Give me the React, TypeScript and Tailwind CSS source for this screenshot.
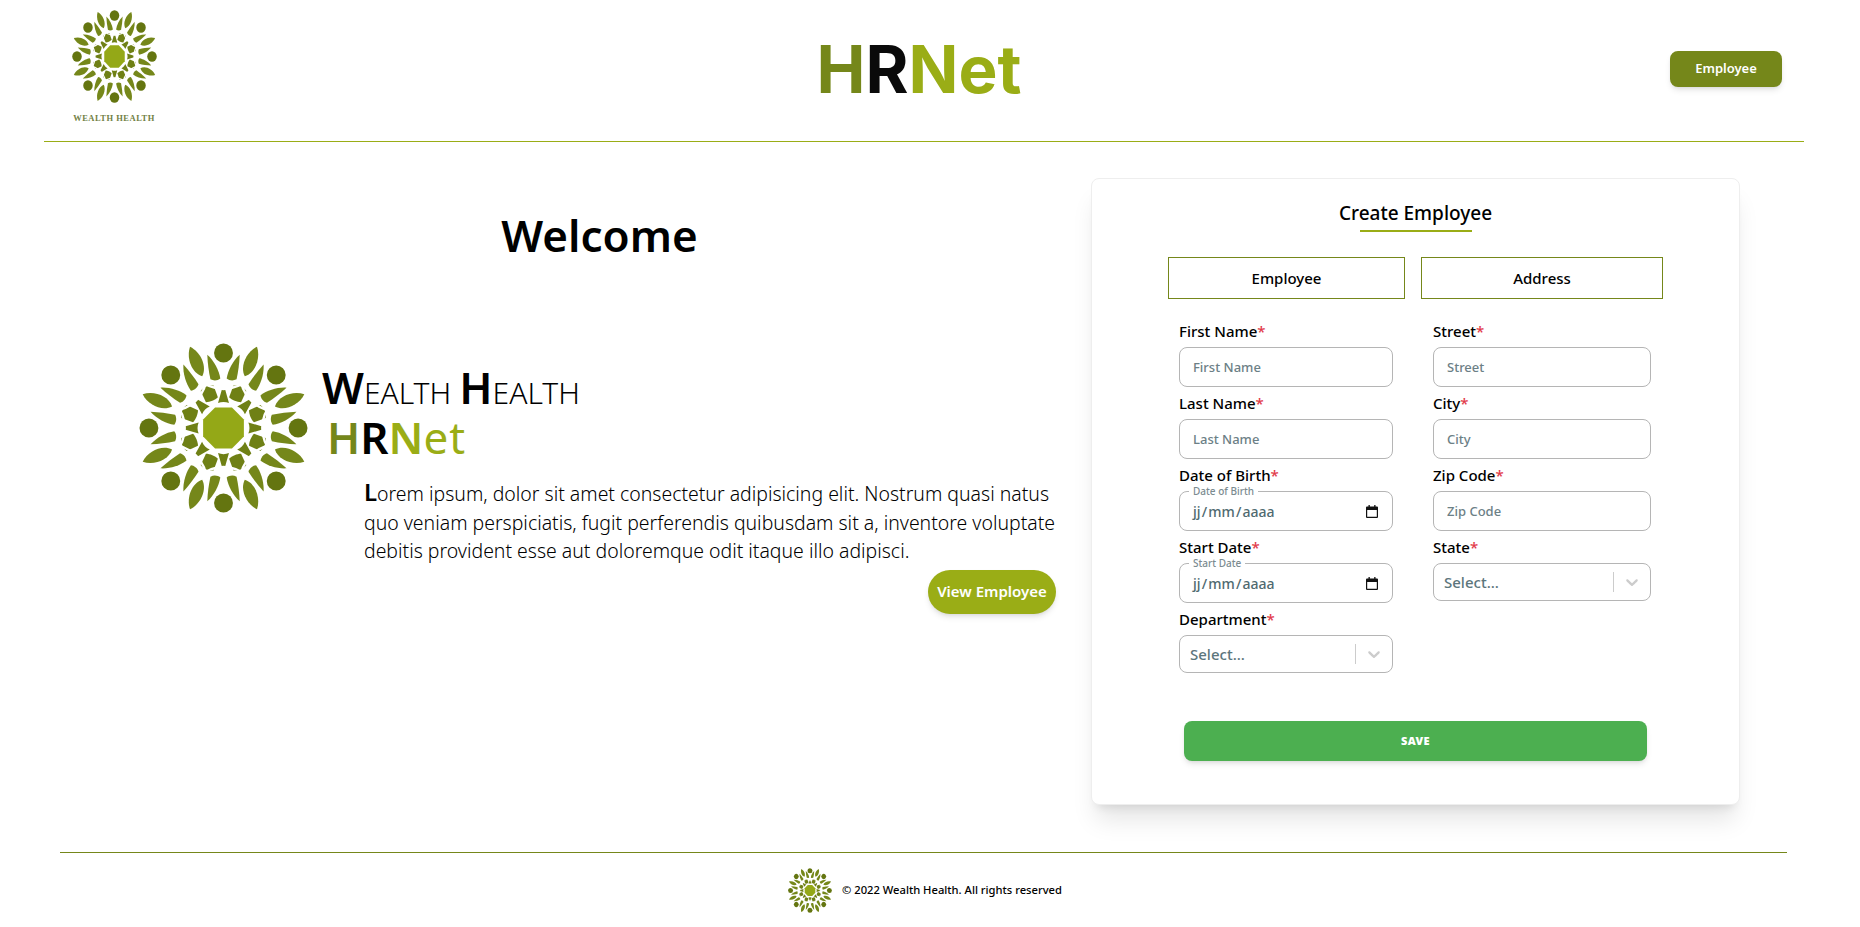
import React from "react";

const ANGLES = [0, 45, 90, 135, 180, 225, 270, 315];

// flower logo, drawn at 170 units across
function FlowerLogo({ className }: { className?: string }) {
  return (
    <svg viewBox="-85 -85 170 170" preserveAspectRatio="none" className={className}>
      <polygon
        points="-8.5,-20.5 8.5,-20.5 20.5,-8.5 20.5,8.5 8.5,20.5 -8.5,20.5 -20.5,8.5 -20.5,-8.5"
        fill="#94a817"
      />
      {ANGLES.map((a) => (
        <g key={a} transform={`rotate(${a})`}>
          <path d="M-5.5 -25 C-2 -26.5 2 -26.5 5.5 -25 L1.5 -39 L-1.5 -39 Z" fill="#6f8015" />
        </g>
      ))}
      {ANGLES.map((a) => (
        <g key={a} transform={`rotate(${a + 22.5})`}>
          {/* side crescents */}
          <path d="M-16 -47 C-13 -46 -9 -47 -6.5 -50 C-8 -58 -10 -66 -13 -74 C-17 -66 -18 -55 -16 -47 Z" fill="#75871a" />
          <path d="M16 -47 C13 -46 9 -47 6.5 -50 C8 -58 10 -66 13 -74 C17 -66 18 -55 16 -47 Z" fill="#75871a" />
          {/* mosaic block */}
          <path d="M-6.5 -30.5 C-3 -29 3 -29 6.5 -30.5 L7 -43 C3 -45.5 -3 -45.5 -7 -43 Z" fill="#6f8015" />
        </g>
      ))}
      {/* white arcs round each dot cut the mosaic */}
      {ANGLES.map((a) => (
        <circle key={a} cx="0" cy="-75" r="36" transform={`rotate(${a})`} fill="none" stroke="#ffffff" strokeWidth="2.4" />
      ))}
      {ANGLES.map((a) => (
        <g key={a} transform={`rotate(${a + 22.5})`}>
          {/* big leaf */}
          <path d="M0 -56 C-8.5 -63 -8 -79 0 -88 C8 -79 8.5 -63 0 -56 Z" fill="#75871a" />
        </g>
      ))}
      {ANGLES.map((a) => (
        <circle key={a} cx="0" cy="-75" r="9.5" transform={`rotate(${a})`} fill="#647510" />
      ))}
    </svg>
  );
}

function CalendarIcon() {
  return (
    <svg viewBox="0 0 12 13" className="w-[12px] h-[13px]">
      <path
        d="M1 1.5h10a1 1 0 0 1 1 1v9.5a1 1 0 0 1-1 1H1a1 1 0 0 1-1-1V2.5a1 1 0 0 1 1-1Zm.2 3.6v6.7h9.6V5.1H1.2Z"
        fill="#111"
        fillRule="evenodd"
      />
      <rect x="2.5" y="0" width="1.3" height="2" fill="#111" />
      <rect x="8.2" y="0" width="1.3" height="2" fill="#111" />
    </svg>
  );
}

function FieldLabel({ text }: { text: string }) {
  return (
    <label className="h-[32px] flex items-center text-[15px] font-medium text-black leading-none">
      {text}
      <span className="text-[#e23b4a] self-start mt-[9px]">*</span>
    </label>
  );
}

function TextField({ label }: { label: string }) {
  return (
    <div className="flex flex-col">
      <FieldLabel text={label} />
      <input
        placeholder={label}
        className="h-[40px] w-full rounded-lg border border-[#b5b5b5] pl-[13px] text-[13px] font-medium outline-none placeholder:text-[#6c8086]"
      />
    </div>
  );
}

function DateField({ label }: { label: string }) {
  return (
    <div className="flex flex-col">
      <FieldLabel text={label} />
      <fieldset className="h-[40px] w-full rounded-lg border border-[#b5b5b5]">
        <legend className="ml-[9px] px-[4px] text-[10px] leading-[1px] h-px font-medium text-[#7b8b90]">
          {label}
        </legend>
        <div className="h-[38px] flex w-full items-center justify-between pl-[13px] pr-[14px] text-[14px] font-medium text-[#4f6a70]">
          <span className="[word-spacing:-2.5px]">jj / mm / aaaa</span>
          <CalendarIcon />
        </div>
      </fieldset>
    </div>
  );
}

function SelectField({ label }: { label: string }) {
  return (
    <div className="flex flex-col">
      <FieldLabel text={label} />
      <div className="h-[38px] w-full rounded-lg border border-[#b5b5b5] flex items-center pl-[10px]">
        <span className="flex-1 text-[15px] font-medium text-[#5c767c]">Select...</span>
        <span className="w-px h-[20px] bg-[#cccccc]" />
        <svg viewBox="0 0 20 20" className="w-[20px] h-[20px] mx-[8px]" fill="#cccccc">
          <path d="M4.516 7.548c0.436-0.446 1.043-0.481 1.576 0l3.908 3.747 3.908-3.747c0.533-0.481 1.141-0.446 1.574 0 0.436 0.445 0.408 1.197 0 1.615-0.406 0.418-4.695 4.502-4.695 4.502-0.217 0.223-0.502 0.335-0.787 0.335s-0.57-0.112-0.789-0.335c0 0-4.287-4.084-4.695-4.502s-0.436-1.17 0-1.615z" />
        </svg>
      </div>
    </div>
  );
}

export default function App() {
  return (
    <div className="min-h-[927px] bg-white text-black font-['Noto_Sans',sans-serif]">
      {/* Header */}
      <header className="ml-[44px] mr-[56px] h-[142px] border-b border-[#9aad16] flex items-center justify-between">
        <div className="ml-[20px] w-[104px] pr-[4px] self-start pt-[10px] flex flex-col items-center">
          <FlowerLogo className="w-[85px] h-[93px]" />
          <span className="mt-[9px] text-[8.5px] leading-[12px] font-['Liberation_Serif',serif] font-bold tracking-[0.5px] text-[#727f45]">
            WEALTH HEALTH
          </span>
        </div>
        <h1 className="mb-[2px] text-[65.5px] leading-none font-bold font-['Inter',sans-serif]">
          <span className="text-[#75871a]">H</span>
          <span className="text-[#0a0a0a]">R</span>
          <span className="text-[#9aad16]">Net</span>
        </h1>
        <button className="mr-[22px] mb-[4px] w-[112px] h-[36px] rounded-lg bg-[#75871a] text-white text-[13px] font-semibold shadow-md">
          Employee
        </button>
      </header>

      {/* Main */}
      <main className="flex items-start pt-[36px] pl-[139px] h-[710px]">
        <section className="w-[917px]">
          <h2 className="mt-[35px] h-[44px] pl-[4px] text-center text-[44px] leading-[44px] font-semibold">Welcome</h2>
          <div className="mt-[86px] flex items-start">
            <FlowerLogo className="w-[169px] h-[170px] shrink-0" />
            <div className="ml-[14px] flex-1 flex flex-col">
              <div className="mt-[22px] h-[46px] flex items-baseline leading-none">
                <span className="text-[44px] font-semibold">W</span>
                <span className="text-[30px] font-light">EALTH</span>
                <span className="ml-[8px] text-[44px] font-semibold">H</span>
                <span className="text-[30px] font-light">EALTH</span>
              </div>
              <div className="ml-[5px] mt-[4px] h-[44px] text-[44px] leading-[44px] font-semibold">
                <span className="text-[#75871a]">H</span>
                <span>R</span>
                <span className="text-[#9aad16]">N</span>
                <span className="text-[#9aad16] font-normal tracking-[1px]">et</span>
              </div>
              <p className="ml-[42px] mt-[21px] text-[19.45px] leading-[28.5px] font-light">
                <span className="text-[24px] leading-none font-semibold">L</span>
                orem ipsum, dolor sit amet consectetur adipisicing elit. Nostrum quasi natus quo veniam perspiciatis,
                fugit perferendis quibusdam sit a, inventore voluptate debitis provident esse aut doloremque odit itaque
                illo adipisci.
              </p>
              <button className="self-end mt-[4px] w-[128px] h-[44px] rounded-full bg-[#9aad16] text-white text-[15px] font-semibold shadow-md">
                View Employee
              </button>
            </div>
          </div>
        </section>

        {/* Create employee card */}
        <section className="ml-[35px] w-[649px] h-[627px] rounded-lg border border-[#eeeeee] bg-white shadow-xl flex flex-col">
          <h3 className="mt-[21px] text-center text-[19px] leading-[26px] font-medium">Create Employee</h3>
          <div className="mt-[4px] mx-auto w-[112px] h-[2px] bg-[#9aad16]" />
          <div className="mt-[25px] ml-[76px] flex gap-[16px]">
            <div className="w-[237px]">
              <div className="h-[42px] border border-[#75871a] flex items-center justify-center text-[15px] font-medium">
                Employee
              </div>
              <div className="mt-[16px] pl-[11px] pr-[12px] flex flex-col">
                <TextField label="First Name" />
                <TextField label="Last Name" />
                <DateField label="Date of Birth" />
                <DateField label="Start Date" />
                <SelectField label="Department" />
              </div>
            </div>
            <div className="w-[242px]">
              <div className="h-[42px] border border-[#75871a] flex items-center justify-center text-[15px] font-medium">
                Address
              </div>
              <div className="mt-[16px] px-[12px] flex flex-col">
                <TextField label="Street" />
                <TextField label="City" />
                <TextField label="Zip Code" />
                <SelectField label="State" />
              </div>
            </div>
          </div>
          <button className="mt-[48px] mx-auto w-[463px] h-[40px] rounded-lg bg-[#4caf50] text-white text-[11px] tracking-[0.3px] font-black shadow-md">
            SAVE
          </button>
        </section>
      </main>

      {/* Footer */}
      <footer className="ml-[60px] mr-[73px] h-[75px] pl-[3px] border-t border-[#75871a] flex items-center justify-center gap-[10px]">
        <FlowerLogo className="w-[44px] h-[45px]" />
        <span className="text-[11.2px] font-medium">© 2022 Wealth Health. All rights reserved</span>
      </footer>
    </div>
  );
}
